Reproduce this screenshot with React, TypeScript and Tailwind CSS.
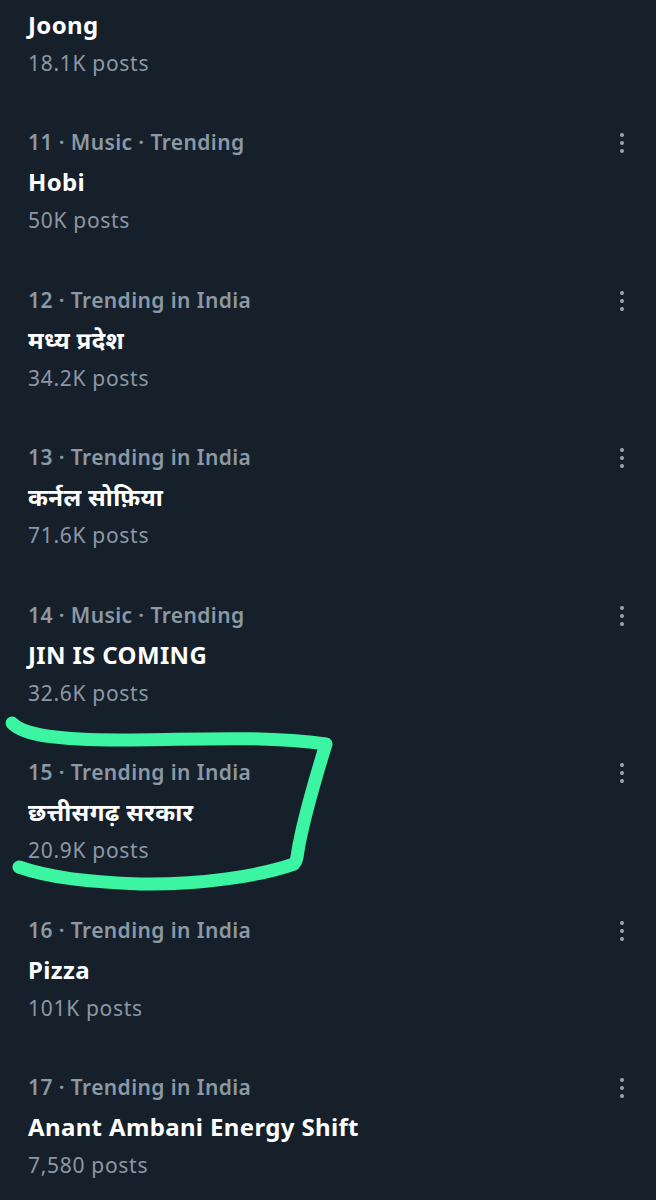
const trends = [
  { meta: "", title: "Joong", posts: "18.1K posts" },
  { meta: "11 · Music · Trending", title: "Hobi", posts: "50K posts" },
  { meta: "12 · Trending in India", title: "मध्य प्रदेश", posts: "34.2K posts" },
  { meta: "13 · Trending in India", title: "कर्नल सोफ़िया", posts: "71.6K posts" },
  { meta: "14 · Music · Trending", title: "JIN IS COMING", posts: "32.6K posts" },
  { meta: "15 · Trending in India", title: "छत्तीसगढ़ सरकार", posts: "20.9K posts" },
  { meta: "16 · Trending in India", title: "Pizza", posts: "101K posts" },
  { meta: "17 · Trending in India", title: "Anant Ambani Energy Shift", posts: "7,580 posts" },
];

function MoreDots() {
  return (
    <div className="flex flex-col items-center gap-[4px] pt-[10px]">
      <span className="w-[4px] h-[4px] rounded-full bg-[#9aa6b2]" />
      <span className="w-[4px] h-[4px] rounded-full bg-[#9aa6b2]" />
      <span className="w-[4px] h-[4px] rounded-full bg-[#9aa6b2]" />
    </div>
  );
}

export default function App() {
  return (
    <main
      className="relative w-[656px] h-[1200px] overflow-hidden bg-[#16202a] text-white"
      style={{ fontFamily: '"Noto Sans", Inter, "Liberation Sans", sans-serif' }}
    >
      <div className="flex flex-col">
        {trends.map((t, i) => (
          <div
            key={i}
            className={`flex justify-between pl-[28px] pr-[32px] ${i === 0 ? "pt-[5px] pb-[20px]" : "py-[20.25px]"}`}
          >
            <div className="flex flex-col">
              {t.meta && (
                <div className="text-[21px] leading-[39px] font-semibold text-[#8b98a5] tracking-[0.4px]">
                  {t.meta}
                </div>
              )}
              <div className="text-[24px] leading-[39px] font-bold text-white tracking-[0.35px]">
                {t.title}
              </div>
              <div className="text-[21px] leading-[39px] text-[#8b98a5] tracking-[0.7px]">{t.posts}</div>
            </div>
            {t.meta && <MoreDots />}
          </div>
        ))}
      </div>

      {/* hand-drawn highlight around #15 */}
      <svg
        className="absolute left-0 top-0 pointer-events-none"
        width="656"
        height="1200"
        viewBox="0 0 656 1200"
      >
        <path
          d="M12 723 C 24 736, 60 740, 120 740 C 190 740, 260 735, 326 744 C 318 770, 306 810, 300 840 C 297 852, 298 860, 294 864 C 260 876, 200 885, 140 884 C 90 882, 50 878, 19 867"
          fill="none"
          stroke="#3cf5a3"
          strokeWidth="13"
          strokeLinecap="round"
          strokeLinejoin="round"
        />
      </svg>
    </main>
  );
}
